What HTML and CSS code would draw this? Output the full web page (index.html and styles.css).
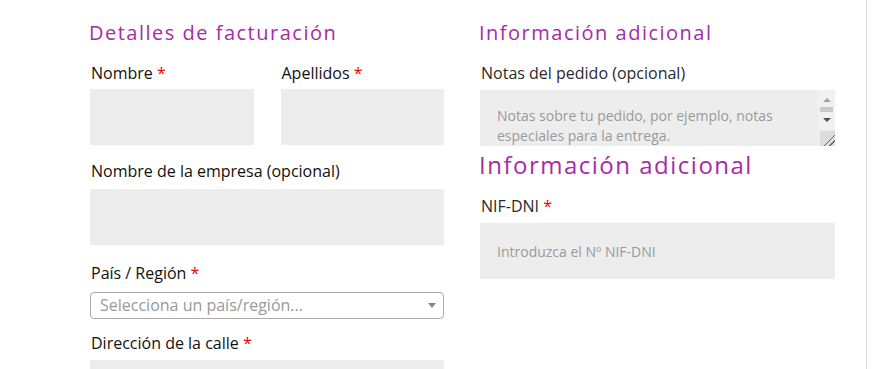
FILE: index.html
```html
<!DOCTYPE html>
<html lang="es">

<head>
  <meta charset="UTF-8">
  <meta name="viewport" content="width=device-width, initial-scale=1.0">
  <title>Finalizar compra</title>
  <link rel="stylesheet" href="styles.css">
</head>

<body>
  <div class="page">
    <div class="checkout">
      <div class="col">
        <h3 class="section-title">Detalles de facturación</h3>
        <div class="row">
          <div class="field half">
            <label for="nombre">Nombre <span class="req">*</span></label>
            <input id="nombre" type="text">
          </div>
          <div class="field half">
            <label for="apellidos">Apellidos <span class="req">*</span></label>
            <input id="apellidos" type="text">
          </div>
        </div>
        <div class="field company">
          <label for="empresa">Nombre de la empresa (opcional)</label>
          <input id="empresa" type="text">
        </div>
        <div class="field country">
          <label>País / Región <span class="req">*</span></label>
          <div class="select">
            <span class="select-text">Selecciona un país/región...</span>
            <span class="select-arrow"></span>
          </div>
        </div>
        <div class="field street">
          <label for="calle">Dirección de la calle <span class="req">*</span></label>
          <input id="calle" type="text">
        </div>
      </div>

      <div class="col">
        <h3 class="section-title">Información adicional</h3>
        <div class="field notes">
          <label class="soft" for="notas">Notas del pedido (opcional)</label>
          <div class="textarea-wrap">
            <textarea id="notas" placeholder="Notas sobre tu pedido, por ejemplo, notas especiales para la entrega."></textarea>
            <span class="scrollbar" aria-hidden="true">
              <i class="sb-up"></i>
              <i class="sb-thumb"></i>
              <i class="sb-down"></i>
            </span>
          </div>
        </div>
        <h3 class="section-title big">Información adicional</h3>
        <div class="field">
          <label class="soft" for="nif">NIF-DNI <span class="req">*</span></label>
          <input id="nif" type="text" placeholder="Introduzca el Nº NIF-DNI">
        </div>
      </div>
    </div>
  </div>
</body>

</html>
```

FILE: styles.css
```css
body {
  font-family: "Open Sans", Arial, sans-serif;
  margin: 0;
  padding: 0;
  background: #fff;
  color: #111;
}

.page {
  display: flex;
  height: 369px;
  overflow: hidden;
}

.checkout {
  width: 776px;
  padding: 0 0 0 90px;
  border-right: 1px solid #dcdcdc;
  display: grid;
  grid-template-columns: 354px 355px;
  column-gap: 36px;
  align-items: start;
}

/* titulos */
.section-title {
  font-family: "Open Sans", sans-serif;
  font-weight: 400;
  font-size: 20px;
  line-height: 28px;
  letter-spacing: 1.5px;
  color: #a82aa8;
  margin: 19px 0 14px -1px;
}

.section-title.big {
  font-size: 24px;
  line-height: 32px;
  letter-spacing: 1.5px;
  margin: 3px 0 13px -1px;
}

.row {
  display: flex;
  gap: 27px;
}

.half {
  flex: 1;
}

.field {
  margin-bottom: 14px;
}

label {
  display: block;
  font-size: 16px;
  line-height: 24px;
  margin: 0 0 5px 1px;
  color: #111;
}

.row label {
  margin-bottom: 4px;
}

.company {
  margin-bottom: 16px;
}

.company label {
  margin-bottom: 6px;
}

.country {
  margin-bottom: 12px;
}

.country label {
  margin-bottom: 7px;
}

label.soft {
  color: #2a2a2a;
}

.notes {
  margin-bottom: 0;
}

.req {
  color: #e00;
}

input[type="text"],
textarea {
  display: block;
  width: 100%;
  box-sizing: border-box;
  height: 56px;
  border: none;
  background: #ededed;
  font-family: "Open Sans", Arial, sans-serif;
  font-size: 14px;
  padding: 0 17px;
  outline: none;
}

textarea {
  padding: 16px 34px 16px 17px;
  line-height: 20px;
  resize: vertical;
}

::placeholder {
  color: #9a9a9a;
}

textarea::-webkit-resizer {
  background: linear-gradient(135deg, transparent 0 62%, #6a6a6a 62% 66%, transparent 66% 80%, #6a6a6a 80% 84%, transparent 84%), #dcdcdc;
}

/* barra de desplazamiento dibujada */
.textarea-wrap {
  position: relative;
}

.scrollbar {
  position: absolute;
  top: 0;
  right: 0;
  width: 17px;
  height: 39px;
  background: #f1f1f1;
  display: flex;
  flex-direction: column;
  align-items: center;
}

.sb-up,
.sb-down {
  width: 0;
  height: 0;
  border-left: 4px solid transparent;
  border-right: 4px solid transparent;
}

.sb-up {
  margin-top: 8px;
  border-bottom: 4px solid #a3a3a3;
}

.sb-thumb {
  width: 13px;
  height: 5px;
  margin-top: 5px;
  background: #c9c9c9;
}

.sb-down {
  margin-top: 6px;
  border-top: 4px solid #505050;
}

.select {
  height: 27px;
  box-sizing: border-box;
  border: 1px solid #aaa;
  border-radius: 4px;
  display: flex;
  align-items: center;
  justify-content: space-between;
  padding: 0 7px 0 9px;
}

.select-text {
  font-size: 16px;
  color: #999;
  line-height: 25px;
}

.select-arrow {
  width: 0;
  height: 0;
  border-left: 4px solid transparent;
  border-right: 4px solid transparent;
  border-top: 5px solid #888;
}
```
